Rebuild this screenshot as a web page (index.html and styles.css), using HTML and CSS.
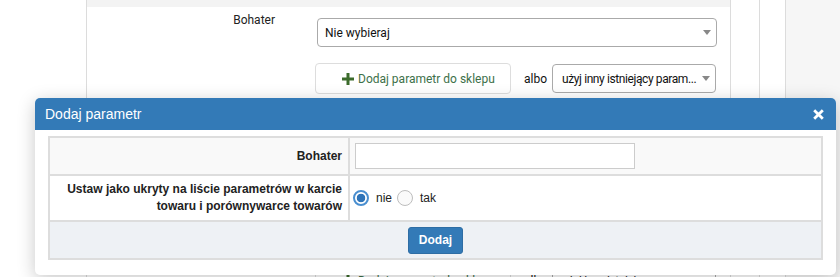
FILE: index.html
```html
<!DOCTYPE html>
<html lang="pl">
<head>
<meta charset="utf-8">
<title>Dodaj parametr</title>
<link rel="stylesheet" href="styles.css">
</head>
<body>
<div class="page">
  <div class="gutter"></div>
  <main class="panel">
    <div class="strip"></div>
    <div class="groups">
      <div class="group">
        <div class="g-label">Bohater</div>
        <div class="g-controls">
          <div class="select wide"><span>Nie wybieraj</span><i class="caret"></i></div>
          <div class="btn-row">
            <button class="add-btn"><svg class="plus" width="12" height="12" viewBox="0 0 12 12"><path d="M4.5 0h3v4.5H12v3H7.5V12h-3V7.5H0v-3h4.5z" fill="#3b6b2b"/></svg><span>Dodaj parametr do sklepu</span></button>
            <span class="albo">albo</span>
            <div class="select narrow"><span class="sel-text">użyj inny istniejący param...</span><i class="caret"></i></div>
          </div>
        </div>
      </div>
      <div class="group">
        <div class="g-label">Płeć</div>
        <div class="g-controls">
          <div class="select wide"><span>Nie wybieraj</span><i class="caret"></i></div>
          <div class="btn-row">
            <button class="add-btn"><svg class="plus" width="12" height="12" viewBox="0 0 12 12"><path d="M4.5 0h3v4.5H12v3H7.5V12h-3V7.5H0v-3h4.5z" fill="#3b6b2b"/></svg><span>Dodaj parametr do sklepu</span></button>
            <span class="albo">albo</span>
            <div class="select narrow"><span class="sel-text">użyj inny istniejący param...</span><i class="caret"></i></div>
          </div>
        </div>
      </div>
      <div class="group">
        <div class="g-label">Wiek</div>
        <div class="g-controls">
          <div class="select wide"><span>Nie wybieraj</span><i class="caret"></i></div>
          <div class="btn-row">
            <button class="add-btn"><svg class="plus" width="12" height="12" viewBox="0 0 12 12"><path d="M4.5 0h3v4.5H12v3H7.5V12h-3V7.5H0v-3h4.5z" fill="#3b6b2b"/></svg><span>Dodaj parametr do sklepu</span></button>
            <span class="albo">albo</span>
            <div class="select narrow"><span class="sel-text">użyj inny istniejący param...</span><i class="caret"></i></div>
          </div>
        </div>
      </div>
    </div>
  </main>
  <div class="col c1"></div>
  <div class="col c2"></div>
  <div class="rest"></div>
</div>

<div class="modal">
  <div class="modal-head">
    <span class="modal-title">Dodaj parametr</span>
    <svg class="close" width="11" height="11" viewBox="0 0 11 11"><path d="M1.2 1.2L9.8 9.8M9.8 1.2L1.2 9.8" stroke="#fff" stroke-width="2.8"/></svg>
  </div>
  <div class="modal-body">
    <div class="form-grid">
      <div class="cell lbl shade">Bohater</div>
      <div class="cell ctl shade"><span class="text-input"></span></div>
      <div class="cell lbl row2">Ustaw jako ukryty na liście parametrów w karcie towaru i porównywarce towarów</div>
      <div class="cell ctl row2">
        <span class="radio on"></span><span class="opt">nie</span>
        <span class="radio"></span><span class="opt">tak</span>
      </div>
      <div class="cell foot"><button class="submit">Dodaj</button></div>
    </div>
  </div>
</div>
</body>
</html>
```
FILE: styles.css
```css
* { box-sizing: border-box; }

body {
  margin: 0;
  background: #fff;
  font-family: Roboto, "Liberation Sans", sans-serif;
}

.page {
  display: flex;
  height: 277px;
  overflow: hidden;
}

.gutter { width: 86px; flex: none; }

.panel {
  width: 645px;
  flex: none;
  border-left: 1px solid #dcdcdc;
  border-right: 1px solid #dcdcdc;
}

.strip { height: 7px; background: #f3f3f3; }

.groups {
  padding-top: 11px;
  display: flex;
  flex-direction: column;
  gap: 25px;
}

.group {
  display: grid;
  grid-template-columns: 188px 400px;
  column-gap: 42px;
}

.g-label {
  font-size: 12px;
  line-height: 16px;
  text-align: right;
  color: #222;
  margin-top: -6px;
}

.select {
  height: 29px;
  border: 1px solid #aaa;
  border-radius: 4px;
  background: #fff;
  display: flex;
  align-items: center;
  justify-content: space-between;
  padding: 0 5px 0 7px;
  font-size: 12px;
  color: #111;
  white-space: nowrap;
}

.caret {
  width: 0;
  height: 0;
  flex: none;
  border-left: 4px solid transparent;
  border-right: 4px solid transparent;
  border-top: 5px solid #888;
}

.btn-row {
  display: flex;
  align-items: center;
  margin-top: 16px;
  margin-left: -2px;
}

.add-btn {
  width: 196px;
  height: 31px;
  border: 1px solid #ddd;
  border-radius: 4px;
  background: #fff;
  display: flex;
  align-items: center;
  gap: 4px;
  padding: 0 0 0 26px;
  font-family: Roboto, "Liberation Sans", sans-serif;
  font-size: 12px;
  color: #3d7049;
}

.plus { flex: none; }

.albo {
  margin-left: 13px;
  font-size: 12px;
  color: #111;
}

.select.narrow {
  width: 164px;
  margin-left: 5px;
  padding-left: 9px;
}

.sel-text { letter-spacing: -0.4px; }

.col {
  flex: none;
  border-right: 1px solid #dcdcdc;
}
.c1 { width: 29px; }
.c2 { width: 26px; }
.rest { flex: 1; background: #f6f6f6; }

/* modal */
.modal {
  position: absolute;
  left: 35px;
  top: 98px;
  width: 801px;
  background: #fff;
  border-radius: 5px;
  overflow: hidden;
  box-shadow: 0 4px 18px rgba(0, 0, 0, 0.22);
  font-family: "Liberation Sans", Arial, sans-serif;
}

.modal-head {
  height: 32px;
  background: #337ab7;
  display: flex;
  align-items: center;
  justify-content: space-between;
  padding: 0 12px 0 10px;
  color: #fff;
  font-size: 14px;
}

.modal-body { padding: 6px 13px 15px; }

.form-grid {
  display: grid;
  grid-template-columns: 298px 471px;
  grid-template-rows: 36px 44px 36px;
  gap: 2px;
  padding: 2px;
  background: #ddd;
}

.cell {
  background: #fff;
  display: flex;
  align-items: center;
  font-size: 12px;
  color: #222;
}

.cell.shade { background: #f9f9f9; }

.cell.lbl {
  justify-content: flex-end;
  text-align: right;
  font-weight: bold;
  line-height: 17px;
  padding: 0 6px 0 10px;
}

.cell.ctl { padding-left: 5px; }
.cell.ctl.row2 { padding-left: 3px; }

.text-input {
  width: 280px;
  height: 26px;
  border: 1px solid #ccc;
  background: #fff;
}

.radio {
  width: 16px;
  height: 16px;
  border-radius: 50%;
  border: 1px solid #bdbdbd;
  background: #fafafa;
  flex: none;
}

.radio.on {
  border: 2px solid #4a8fd0;
  background: radial-gradient(circle, #2f74b8 0 4px, #fff 4.6px);
}

.opt { margin: 0 5px 0 7px; }

.cell.foot {
  grid-column: 1 / 3;
  background: #eef1f5;
  justify-content: center;
}

.submit {
  width: 55px;
  height: 27px;
  border: 1px solid #2e6da4;
  border-radius: 3px;
  background: #337ab7;
  color: #fff;
  font-family: "Liberation Sans", Arial, sans-serif;
  font-size: 12px;
  font-weight: bold;
  padding: 0;
}
```
